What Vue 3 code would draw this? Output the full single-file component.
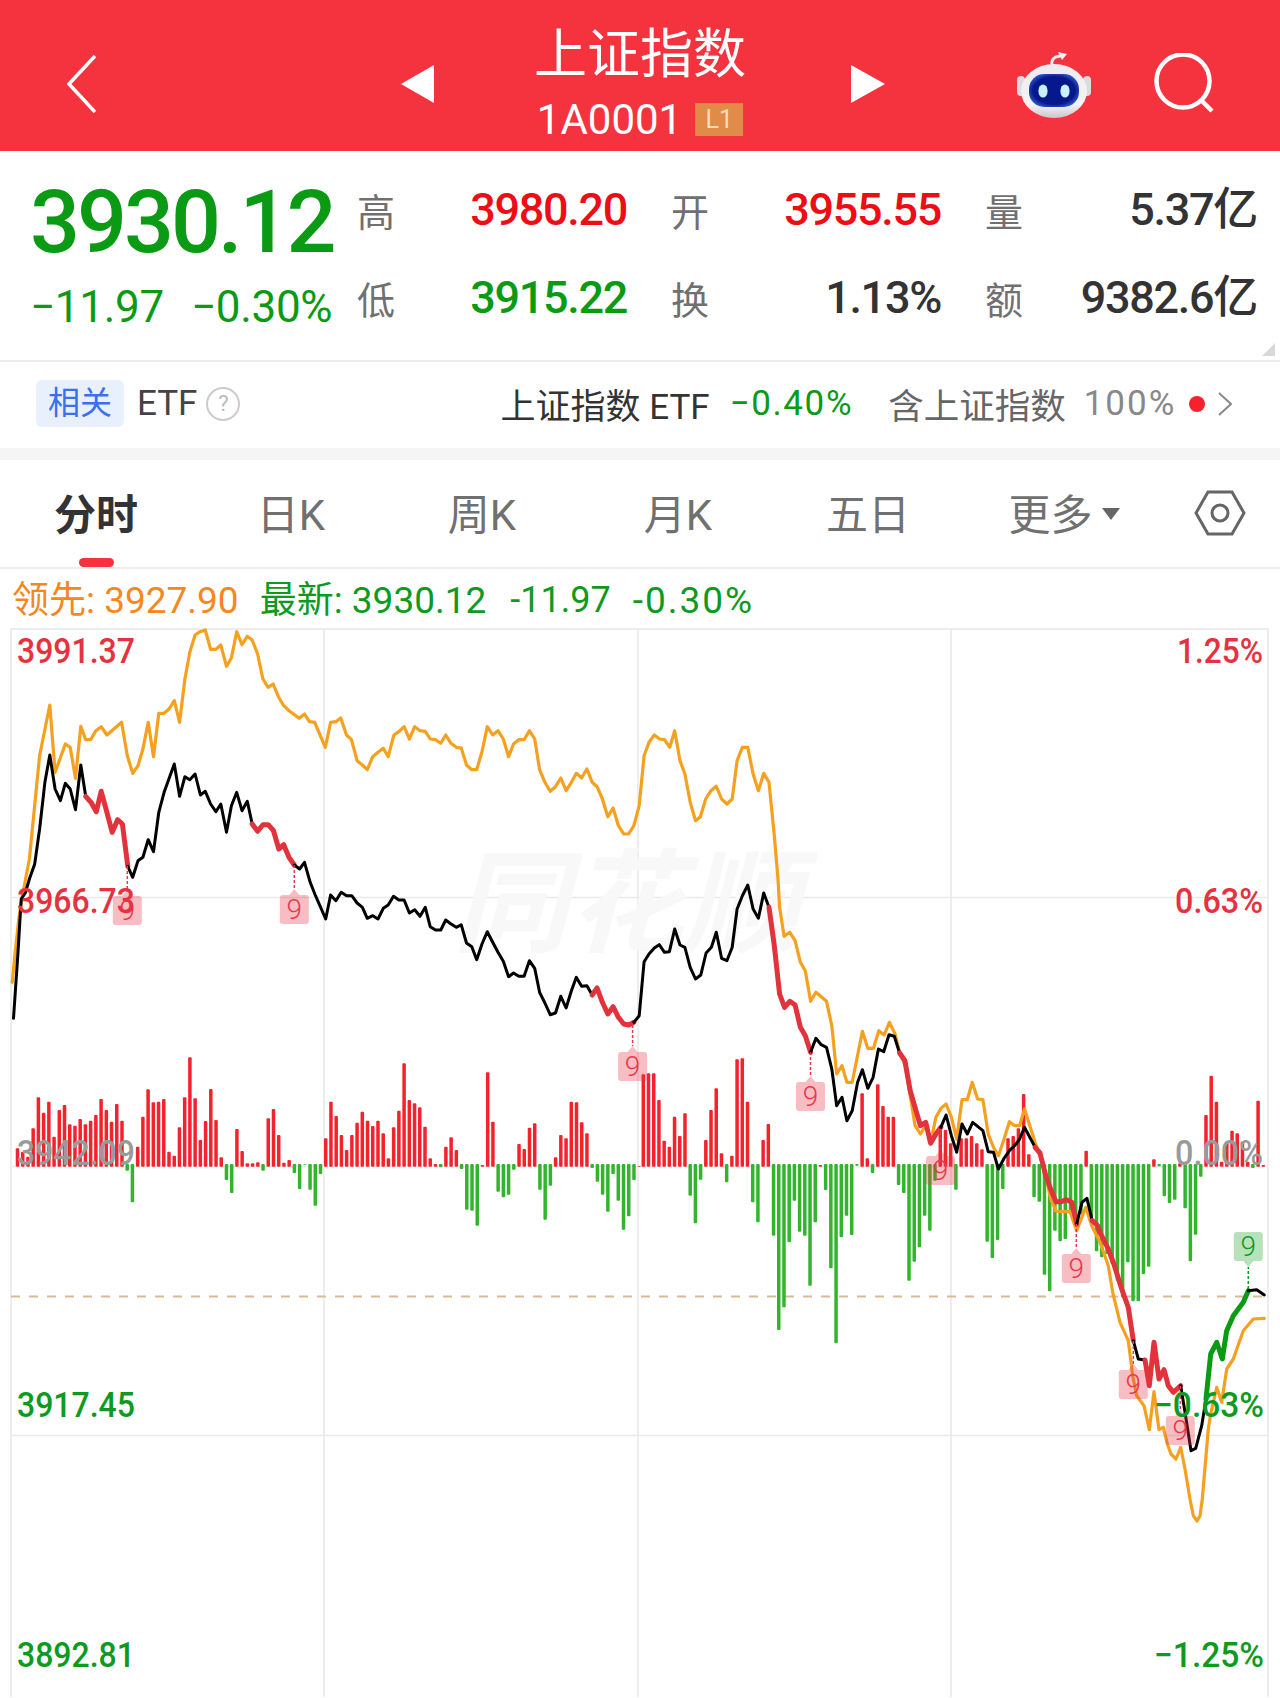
<template>
  <div class="page">
    <!-- top bar -->
    <header class="topbar">
      <svg class="back" viewBox="0 0 29 58"><polyline points="28,1 2,29 28,57" /></svg>
      <svg class="prev" viewBox="0 0 33 38"><polygon points="33,0 0,19 33,38" /></svg>
      <div class="title-block">
        <div class="title">上证指数</div>
        <div class="sub">1A0001<span class="level">L1</span></div>
      </div>
      <svg class="next" viewBox="0 0 34 38"><polygon points="0,0 34,19 0,38" /></svg>
      <svg class="robot" viewBox="0 0 74 68">
        <defs>
          <radialGradient id="visorGlow" cx="50%" cy="50%" r="60%">
            <stop offset="70%" stop-color="#07188c" />
            <stop offset="100%" stop-color="#3f6fe0" />
          </radialGradient>
          <linearGradient id="headShade" x1="0" y1="0" x2="0" y2="1">
            <stop offset="0%" stop-color="#ececee" />
            <stop offset="75%" stop-color="#f4f4f6" />
            <stop offset="100%" stop-color="#c9c6cc" />
          </linearGradient>
        </defs>
        <path d="M35 15 C34 9 38 6 44 6" fill="none" stroke="#eee" stroke-width="3" />
        <polygon points="41,2 50,4 45,10" fill="#f3f3f3" />
        <rect x="0" y="26" width="8" height="20" rx="4" fill="#dcdce0" />
        <rect x="66" y="26" width="8" height="20" rx="4" fill="#dcdce0" />
        <ellipse cx="37" cy="41" rx="33" ry="27" fill="url(#headShade)" />
        <rect x="12" y="24" width="50" height="33" rx="15" fill="url(#visorGlow)" />
        <ellipse cx="26" cy="41" rx="4.6" ry="6.6" fill="#c9f0ff" />
        <ellipse cx="48" cy="41" rx="4.6" ry="6.6" fill="#c9f0ff" />
      </svg>
      <svg class="search" viewBox="0 0 66 62">
        <circle cx="33" cy="28" r="26.5" />
        <line x1="52" y1="48" x2="62" y2="58" />
      </svg>
    </header>

    <!-- quote -->
    <section class="quote">
      <div class="price-col">
        <div class="price">3930.12</div>
        <div class="change"><span>−11.97</span><span>−0.30%</span></div>
      </div>
      <div class="stats">
        <div v-for="s in stats" :key="s.label" class="stat">
          <span class="stat-label">{{ s.label }}</span>
          <span :class="['stat-value', s.tone]">{{ s.value }}</span>
        </div>
      </div>
      <span class="corner"></span>
    </section>

    <!-- related ETF -->
    <section class="etf">
      <span class="tag">相关</span>
      <span class="etf-name">ETF</span>
      <span class="help">?</span>
      <span class="etf-fund">上证指数 ETF</span>
      <span class="etf-pct">−0.40%</span>
      <span class="etf-hold">含上证指数</span>
      <span class="etf-ratio">100%</span>
      <span class="dot"></span>
      <svg class="more" viewBox="0 0 14 24"><polyline points="1,1 13,12 1,23" /></svg>
    </section>
    <div class="spacer"></div>

    <!-- period tabs -->
    <nav class="tabs">
      <div v-for="(t, i) in tabs" :key="t" :class="['tab', { active: i === 0 }]">
        <span>{{ t }}</span>
        <svg v-if="t === '更多'" class="caret" viewBox="0 0 18 12"><polygon points="0,0 18,0 9,12" /></svg>
      </div>
      <div class="tab">
        <svg class="hex" viewBox="0 0 54 48">
          <polygon points="3,24 15,3 39,3 51,24 39,45 15,45" />
          <circle cx="27" cy="24" r="8" />
        </svg>
      </div>
    </nav>

    <!-- legend -->
    <div class="legend">
      <span class="lead">领先: 3927.90</span>
      <span class="last">最新: 3930.12</span>
      <span class="last tight">-11.97</span>
      <span class="last wide">-0.30%</span>
    </div>

    <!-- intraday chart, drawn in page coordinates -->
    <svg class="chart" viewBox="0 629 1280 1069">
      <g class="grid">
        <rect x="11" y="630" width="1257" height="1080" />
        <line x1="324" y1="629" x2="324" y2="1698" />
        <line x1="638" y1="629" x2="638" y2="1698" />
        <line x1="951" y1="629" x2="951" y2="1698" />
        <line x1="11" y1="898.5" x2="1268" y2="898.5" />
        <line x1="11" y1="1167.5" x2="1268" y2="1167.5" />
        <line x1="11" y1="1436.5" x2="1268" y2="1436.5" />
      </g>
      <text class="watermark" x="626" y="944" text-anchor="middle" textLength="346" lengthAdjust="spacingAndGlyphs">同花顺</text>
      <line class="prev-close" x1="11" y1="1297.5" x2="1268" y2="1297.5" />

      <rect v-for="(b, i) in volumeBars" :key="i" :x="b.x" :y="b.y" width="3.5" :height="b.h" rx="1" :fill="b.fill" />

      <polyline class="line orange" :points="orangeLine" />
      <polyline v-for="(s, i) in mainLine" :key="i" :class="['line', s.kind]" :points="s.points" />

      <g v-for="m in markers" :key="m.x" :class="['marker', m.tone]">
        <line class="stem" :x1="m.x" :y1="m.from" :x2="m.x" :y2="m.top < m.from ? m.top + 35 : m.top - 6" />
        <path class="flag" :d="flagPath(m)" />
        <text class="nine" :x="m.x" :y="m.top + 24" text-anchor="middle">9</text>
      </g>

      <text v-for="l in axisLabels" :key="l.text" :class="['axis', l.tone]" :x="l.x" :y="l.y" :textLength="l.w"
        lengthAdjust="spacingAndGlyphs">{{ l.text }}</text>
    </svg>
  </div>
</template>

<script setup>
const stats = [
  { label: '高', value: '3980.20', tone: 'up' },
  { label: '开', value: '3955.55', tone: 'up' },
  { label: '量', value: '5.37亿', tone: 'flat' },
  { label: '低', value: '3915.22', tone: 'down' },
  { label: '换', value: '1.13%', tone: 'flat' },
  { label: '额', value: '9382.6亿', tone: 'flat' }
];

const tabs = ['分时', '日K', '周K', '月K', '五日', '更多'];

const axisLabels = [
  { text: '3991.37', x: 17, y: 664, w: 118, tone: 'up' },
  { text: '3966.73', x: 17, y: 914, w: 118, tone: 'up' },
  { text: '3942.09', x: 17, y: 1166, w: 118, tone: 'zero' },
  { text: '3917.45', x: 17, y: 1418, w: 118, tone: 'down' },
  { text: '3892.81', x: 17, y: 1668, w: 118, tone: 'down' },
  { text: '1.25%', x: 1177, y: 664, w: 86, tone: 'up' },
  { text: '0.63%', x: 1175, y: 914, w: 88, tone: 'up' },
  { text: '0.00%', x: 1175, y: 1166, w: 88, tone: 'zero' },
  { text: '−0.63%', x: 1154, y: 1418, w: 110, tone: 'down' },
  { text: '−1.25%', x: 1154, y: 1668, w: 110, tone: 'down' }
];

// the lines were read off enlarged crops, so each run is given in its crop's units
const crop = (ox, oy, sx) => (pts) => pts.map(([x, y]) => [ox + x / sx, oy + y / 3]);
const upperLeft = crop(0, 460, 2.45);
const upperRight = crop(640, 460, 2.45);
const lowerLeft = crop(0, 880, 2.45);
const lowerRight = crop(640, 880, 2.45);
const tail = crop(960, 1200, 3);
const toPoints = (pts) => pts.map(([x, y]) => `${x.toFixed(1)},${y.toFixed(1)}`).join(' ');

const orangeLine = toPoints([
  ...lowerLeft([[30, 310], [38, 210], [46, 120], [55, 50]]),
  ...upperLeft([
    [72, 1200], [97, 890], [122, 738], [135, 940], [160, 855], [172, 865], [185, 958], [198, 802], [210, 842],
    [222, 842], [235, 815], [248, 803], [262, 828], [298, 790], [312, 890], [325, 943], [338, 920], [350, 870],
    [363, 790], [376, 893], [389, 763], [402, 763], [414, 750], [427, 725], [440, 790], [453, 660], [465, 580],
    [478, 528], [490, 518], [503, 513], [516, 571], [529, 571], [541, 558], [555, 622], [567, 597], [580, 518],
    [593, 557], [606, 532], [618, 543], [631, 585], [644, 660], [657, 685], [669, 675], [682, 713], [695, 740],
    [708, 755], [733, 778], [746, 765], [758, 788], [771, 790], [797, 865], [810, 790], [823, 788], [835, 777],
    [849, 828], [861, 842], [875, 905], [888, 918], [900, 932], [913, 893], [926, 880], [939, 868], [951, 893],
    [965, 828], [977, 818], [990, 803], [1003, 840], [1016, 803], [1029, 815], [1042, 817], [1054, 840],
    [1067, 842], [1080, 853], [1092, 828], [1105, 853], [1118, 865], [1130, 867], [1143, 918], [1156, 932],
    [1168, 932], [1181, 878], [1194, 803], [1207, 828], [1220, 815], [1233, 840], [1246, 893], [1258, 855],
    [1271, 842], [1284, 842], [1297, 815], [1310, 840], [1322, 932], [1335, 970], [1348, 997], [1361, 983],
    [1374, 957], [1387, 995], [1400, 970], [1412, 943], [1425, 957], [1438, 930], [1451, 970], [1463, 983],
    [1476, 1020], [1489, 1073], [1502, 1047], [1515, 1100], [1528, 1125], [1540, 1125], [1553, 1100], [1566, 1040]
  ]),
  ...upperRight([
    [10, 890], [22, 850], [35, 828], [48, 840], [60, 842], [73, 865], [85, 815], [98, 905], [110, 945], [123, 1030],
    [136, 1085], [148, 1073], [161, 1020], [174, 995], [187, 982], [200, 1020], [213, 1035], [226, 1020], [238, 905],
    [251, 865], [264, 865], [277, 945], [290, 995], [303, 943], [316, 970], [329, 1130], [338, 1260]
  ]),
  ...lowerRight([
    [342, 85], [353, 172], [367, 160], [380, 185], [393, 250], [405, 275], [418, 367], [431, 340], [457, 367],
    [470, 440], [482, 585], [495, 560], [507, 610], [520, 610], [545, 457], [558, 508], [572, 508], [585, 455],
    [598, 468], [611, 430], [625, 465], [636, 520], [650, 560], [662, 650], [674, 740], [687, 765], [700, 740],
    [712, 790], [725, 715], [738, 687], [750, 675], [763, 715], [776, 780], [789, 662], [802, 662], [814, 610],
    [827, 660], [840, 662], [853, 765], [866, 805], [878, 830], [892, 780], [905, 728], [918, 740], [930, 740],
    [942, 690], [955, 740], [968, 790], [980, 830], [993, 880], [1006, 960], [1019, 995]
  ]),
  ...tail([
    [285, 35], [300, 38], [330, 38], [350, 95], [377, 25], [395, 80], [420, 130], [445, 200], [458, 280], [480, 370],
    [505, 425], [518, 530], [530, 590], [552, 620], [568, 692], [582, 578], [597, 692], [610, 685], [622, 735],
    [633, 765], [648, 780], [662, 745], [675, 810], [690, 900], [700, 950], [711, 966], [720, 950], [727, 900],
    [745, 690], [752, 645], [770, 565], [785, 610], [800, 510], [820, 480], [850, 395], [880, 360], [913, 358]
  ])
]);

// price line: black, with red stretches on the falling legs and green on the last rally
const mainLine = [
  ['black', [
    ...lowerLeft([[33, 418], [44, 220], [52, 60], [62, 42], [72, 0]]),
    ...upperLeft([[85, 1215], [97, 1110], [110, 970], [122, 888], [135, 990], [148, 1025], [160, 973], [172, 990],
      [185, 1052], [198, 918], [210, 1012]])
  ]],
  ['red', upperLeft([[210, 1012], [223, 1030], [236, 1058], [248, 997], [262, 1060], [275, 1120], [288, 1082], [300, 1095],
    [313, 1222]])],
  ['black', upperLeft([[313, 1222], [325, 1255], [338, 1205], [350, 1195], [363, 1142], [376, 1178], [389, 1060], [402, 1000],
    [427, 915], [440, 1012], [453, 953], [465, 962], [478, 945], [491, 1008], [503, 997], [516, 1035], [529, 1058],
    [541, 1035], [555, 1120], [567, 1040], [580, 1000], [593, 1055], [606, 1027], [618, 1095]])],
  ['red', upperLeft([[618, 1095], [631, 1117], [644, 1097], [657, 1097], [670, 1115], [683, 1170], [695, 1157], [708, 1195],
    [721, 1218]])],
  ['black', [
    ...upperLeft([[721, 1218], [734, 1230], [746, 1210]]),
    ...lowerLeft([[760, 10], [773, 50], [798, 120], [810, 48], [823, 65], [836, 40], [849, 50], [862, 50], [875, 72],
      [888, 85], [900, 118], [913, 110], [926, 120], [939, 88], [951, 78], [964, 52], [977, 63], [990, 63], [1003, 102],
      [1016, 92], [1029, 112], [1042, 85], [1054, 143], [1067, 153], [1080, 153], [1092, 123], [1105, 135], [1118, 145],
      [1130, 137], [1143, 192], [1156, 203], [1168, 242], [1181, 195], [1194, 158], [1207, 190], [1220, 220], [1233, 247],
      [1246, 293], [1258, 282], [1271, 292], [1284, 292], [1297, 245], [1310, 268], [1322, 340], [1335, 372], [1348, 407],
      [1361, 402], [1374, 352], [1387, 387], [1400, 335], [1412, 295], [1425, 322], [1438, 320], [1451, 348]])
  ]],
  ['red', lowerLeft([[1451, 348], [1463, 327], [1476, 370], [1489, 405], [1502, 383], [1515, 415], [1528, 435], [1540, 438],
    [1553, 430]])],
  ['black', [
    ...lowerLeft([[1553, 430], [1566, 410]]),
    ...lowerRight([[10, 248], [22, 225], [35, 207], [47, 197], [60, 220], [72, 218], [85, 150], [98, 198], [110, 205],
      [123, 265], [136, 300], [149, 288], [162, 222], [175, 205], [187, 160], [200, 238], [213, 245], [226, 205], [238, 90],
      [251, 50], [264, 18], [277, 90], [290, 118], [303, 42], [316, 85]])
  ]],
  ['red', lowerRight([[316, 85], [329, 200], [342, 345], [354, 385], [367, 367], [380, 378], [393, 445], [405, 470], [418, 520]])],
  ['black', lowerRight([[418, 520], [431, 478], [444, 497], [457, 505], [470, 570], [482, 680], [495, 655], [507, 725], [520, 695],
    [533, 610], [545, 572], [558, 628], [571, 595], [584, 510], [597, 518], [610, 467], [623, 472], [636, 522]])],
  ['red', lowerRight([[636, 522], [649, 545], [662, 635], [675, 690], [687, 740], [700, 730], [712, 793], [725, 765], [737, 745]])],
  ['black', lowerRight([[737, 745], [750, 708], [763, 770], [776, 820], [789, 735], [802, 765], [815, 730], [840, 755], [853, 818],
    [866, 820], [878, 870], [892, 838], [905, 815], [918, 800], [930, 780], [942, 745], [955, 775], [968, 805]])],
  ['red', lowerRight([[968, 805], [980, 822], [993, 885], [1006, 930], [1019, 968], [1032, 968], [1045, 962], [1058, 970],
    [1070, 1035]])],
  ['black', lowerRight([[1070, 1035], [1083, 970], [1095, 958], [1108, 1025]])],
  ['red', [
    ...lowerRight([[1108, 1025], [1121, 1040]]),
    ...tail([[420, 100], [445, 150], [460, 190], [485, 270], [505, 325], [520, 425]])
  ]],
  ['black', tail([[520, 425], [535, 480], [555, 483]])],
  ['red', tail([[555, 483], [568, 560], [582, 430], [597, 540], [612, 512], [625, 560], [640, 580], [662, 560]])],
  ['black', tail([[662, 560], [675, 640], [693, 755], [707, 748], [725, 680], [738, 600]])],
  ['green', tail([[738, 600], [752, 465], [770, 430], [787, 480], [800, 395], [820, 350], [850, 310], [865, 275]])],
  ['black', tail([[865, 275], [890, 272], [913, 288]])]
].map(([kind, pts]) => ({ kind, points: toPoints(pts) }));

// volume per minute in crop units (3 = 1px), positive is red, negative is green
const morningVolume = [
  55, 45, 30, 115, 208, 162, 195, 90, 170, 185, 127, 123, 143, 127, 138, 155, 203, 170, 135, 188, 138, -20, -115, 60,
  150, 232, 193, 195, 203, 45, 33, 118, 208, 328, 205, 80, 137, 233, 140, 28, -48, -87, 113, 47, 10, 10, 13, -20,
  145, 173, 95, 12, 20, -27, -75, -2, -77, -125, -30, 85, 195, 152, 95, 50, 95, 132, 165, 138, 122, 138, 100, 25,
  118, 168, 310, 200, 190, 178, 120, 25, 8, -10, 60, 88, 50, -15, -137, -140, -185, 5, 283, 135, -83, -100, -92,
  -17, 68, 53, 117, 130, -77, -167, -65, 28, 95, 85, 195, 193, 133, 100, -12, -53, -92, -143, -30, -110, -197,
  -157, -48, 2
];
const afternoonVolume = [
  277, 280, 280, 200, 78, 60, 150, 92, 160, -95, -178, -47, 80, 170, 235, 40, -55, 33, 322, 325, 195, -115, -175, 80,
  128, -215, -498, -430, -235, -110, -203, -215, -365, -175, 5, -78, -313, -538, -220, -155, -213, -5, 220, 25, -27,
  247, 182, 150, 150, -63, -87, -350, -293, -250, -155, -200, -50, 110, 110, 70, -77, 85, 85, 92, 70, 52, -233, -282,
  -228, -75, 85, 92, 115, 218, 37, -100, -113, -332, -382, -200, -232, -225, -150, -170, -150, 48, -160, -262, -280,
  -270, -300, -350, -400, -295, -412, -412, -330, -308, 22, -7, -97, -117, -107, 10, -133, -292, -212, -38, 155, 273,
  195, 15, 70, 108, 100, 75, 15, -12, 198, 5
];

const toBars = (values, x0, x1) => {
  const step = (x1 - x0) / (values.length - 1);
  return values.map((v, i) => {
    const h = Math.abs(v) / 3;
    return {
      x: x0 + i * step - 1.75,
      y: v > 0 ? 1167.7 - h : 1165,
      h,
      fill: v > 0 ? '#f5212b' : '#32b42c'
    };
  });
};
const volumeBars = [...toBars(morningVolume, 17.5, 639.2), ...toBars(afternoonVolume, 643.3, 1263.3)];

// "9" signal flags: x is the flag centre, top its box top, from where the stem leaves the line
const markers = [
  { x: 127.3, top: 897, from: 867, tone: 'sell' },
  { x: 294.3, top: 896, from: 866, tone: 'sell' },
  { x: 632.6, top: 1053, from: 1026, tone: 'sell' },
  { x: 810.5, top: 1083, from: 1053, tone: 'sell' },
  { x: 940.5, top: 1157, from: 1133, tone: 'sell' },
  { x: 1076.3, top: 1255, from: 1225, tone: 'sell' },
  { x: 1133.3, top: 1371, from: 1342, tone: 'sell' },
  { x: 1180.3, top: 1417, from: 1387, tone: 'sell' },
  { x: 1248.3, top: 1233, from: 1290, tone: 'buy' }
];

const flagPath = ({ x, top, tone }) => {
  const l = x - 14.5;
  const r = x + 14.5;
  const b = top + 29;
  if (tone === 'buy') {
    return `M${l + 3} ${top}H${r - 3}Q${r} ${top} ${r} ${top + 3}V${b - 3}Q${r} ${b} ${r - 3} ${b}H${x + 5}L${x} ${b + 6}L${x - 5} ${b}H${l + 3}Q${l} ${b} ${l} ${b - 3}V${top + 3}Q${l} ${top} ${l + 3} ${top}Z`;
  }
  return `M${l + 3} ${top}H${x - 5}L${x} ${top - 6}L${x + 5} ${top}H${r - 3}Q${r} ${top} ${r} ${top + 3}V${b - 3}Q${r} ${b} ${r - 3} ${b}H${l + 3}Q${l} ${b} ${l} ${b - 3}V${top + 3}Q${l} ${top} ${l + 3} ${top}Z`;
};
</script>

<style scoped>
.page {
  width: 1280px;
  height: 1698px;
  overflow: hidden;
  background: #fff;
  font-family: Roboto, "Noto Sans CJK SC", sans-serif;
}

/* top bar */
.topbar {
  display: flex;
  align-items: center;
  box-sizing: border-box;
  height: 151px;
  padding-top: 16px;
  background: #f5333f;
  color: #fff;
}
.back {
  width: 29px;
  height: 58px;
  margin-left: 67px;
  fill: none;
  stroke: #fff;
  stroke-width: 3.5;
}
.prev {
  width: 33px;
  height: 38px;
  margin-left: 305px;
  fill: #fff;
}
.next {
  width: 34px;
  height: 38px;
  margin-left: 5px;
  fill: #fff;
}
.title-block {
  align-self: flex-start;
  width: 412px;
  margin-top: -16px;
  text-align: center;
}
.title {
  padding-top: 16px;
  font-family: "Noto Sans CJK SC", sans-serif;
  font-size: 53px;
  line-height: 68px;
}
.sub {
  display: flex;
  align-items: center;
  justify-content: center;
  height: 62px;
  margin-top: 4px;
  font-size: 42px;
}
.level {
  width: 48px;
  height: 33px;
  margin-left: 13px;
  background: #e08b47;
  color: #fbdcb4;
  font-size: 25px;
  line-height: 33px;
}
.robot {
  width: 74px;
  height: 68px;
  margin-left: 132px;
}
.search {
  width: 66px;
  height: 62px;
  margin-left: 59px;
  fill: none;
  stroke: #fff;
  stroke-width: 4.5;
}

/* quote */
.quote {
  position: relative;
  display: flex;
  box-sizing: border-box;
  height: 211px;
  border-bottom: 2px solid #ececec;
}
.price-col {
  box-sizing: border-box;
  width: 358px;
  padding: 21px 0 0 30px;
  color: #0a9a14;
}
.price {
  font-size: 88px;
  font-weight: 500;
  line-height: 100px;
  letter-spacing: -3px;
}
.change {
  display: flex;
  gap: 27px;
  font-size: 44px;
  line-height: 70px;
  letter-spacing: -0.3px;
}
.stats {
  display: grid;
  grid-template-columns: repeat(3, 269px);
  grid-auto-rows: 88px;
  column-gap: 45px;
  padding-top: 14px;
}
.stat {
  display: flex;
  align-items: center;
  justify-content: space-between;
}
.stat-label {
  margin-left: -1px;
  color: #707070;
  font-family: "Noto Sans CJK SC", sans-serif;
  font-size: 38px;
}
.stat-value {
  font-size: 45px;
  font-weight: 500;
  line-height: 1;
  letter-spacing: -1.3px;
}
.stat:nth-child(3n) .stat-value {
  margin-right: -2px;
}
.stat-value.up {
  color: #ee0d14;
}
.stat-value.down {
  color: #0a9a14;
}
.stat-value.flat {
  color: #333;
}
.corner {
  position: absolute;
  right: 5px;
  bottom: 4px;
  border-style: solid;
  border-width: 0 0 13px 13px;
  border-color: transparent transparent #d8d8d8 transparent;
}

/* related ETF */
.etf {
  display: flex;
  align-items: center;
  box-sizing: border-box;
  height: 86px;
  padding-bottom: 3px;
  font-size: 35px;
}
.tag {
  width: 88px;
  height: 47px;
  margin-left: 36px;
  border-radius: 6px;
  background: #e8effd;
  color: #3a6ff0;
  font-size: 32px;
  line-height: 47px;
  text-align: center;
}
.etf-name {
  margin-left: 13px;
  color: #444;
}
.help {
  box-sizing: border-box;
  width: 34px;
  height: 34px;
  margin-left: 9px;
  border: 2.5px solid #ccc;
  border-radius: 50%;
  color: #bbb;
  font-size: 22px;
  line-height: 29px;
  text-align: center;
}
.etf-fund {
  margin-left: 260px;
  color: #333;
  white-space: nowrap;
}
.etf-pct {
  margin-left: 20px;
  color: #0a9a14;
  letter-spacing: 1.6px;
}
.etf-hold {
  margin-left: 35px;
  color: #666;
  font-size: 35.5px;
}
.etf-ratio {
  margin-left: 18px;
  color: #888;
  letter-spacing: 2px;
}
.dot {
  width: 16px;
  height: 16px;
  margin-left: 13px;
  border-radius: 50%;
  background: #f5222d;
}
.more {
  width: 14px;
  height: 24px;
  margin-left: 13px;
  fill: none;
  stroke: #888;
  stroke-width: 2;
}
.spacer {
  height: 12px;
  background: #f5f5f5;
}

/* tabs */
.tabs {
  display: grid;
  grid-template-columns: 192px 198px 184px 208px 172px 220px 92px;
  box-sizing: border-box;
  height: 109px;
  border-bottom: 2px solid #eee;
}
.tab {
  position: relative;
  display: flex;
  align-items: center;
  justify-content: center;
  padding-bottom: 4px;
  color: #707070;
  font-size: 42px;
}
.tab.active {
  color: #333;
  font-weight: 700;
}
.tab.active::after {
  content: "";
  position: absolute;
  bottom: 0;
  left: 79px;
  width: 35px;
  height: 9px;
  border-radius: 5px;
  background: #f5333f;
}
.caret {
  width: 18px;
  height: 12px;
  margin: 4px 0 0 9px;
  fill: #666;
}
.hex {
  width: 54px;
  height: 48px;
  margin-top: 3px;
  fill: none;
  stroke: #666;
  stroke-width: 3;
}

/* legend */
.legend {
  display: flex;
  gap: 24px;
  box-sizing: border-box;
  height: 59px;
  padding: 3px 0 0 12px;
  font-size: 37px;
  line-height: 57px;
}
.lead {
  margin-right: -3px;
  color: #f5871f;
}
.last {
  color: #0d9a1e;
}
.last.tight {
  margin-right: -2px;
  font-size: 36px;
}
.last.wide {
  letter-spacing: 2px;
}

/* chart */
.chart {
  display: block;
  width: 1280px;
  height: 1069px;
}
.grid rect,
.grid line {
  fill: none;
  stroke: #e9e9e9;
  stroke-width: 1.6;
}
.watermark {
  fill: #f8f8f8;
  font-family: "Noto Sans CJK SC", sans-serif;
  font-size: 112px;
  font-style: italic;
  font-weight: 700;
}
.prev-close {
  stroke: #d9b996;
  stroke-width: 2;
  stroke-dasharray: 9 9;
}
.line {
  fill: none;
  stroke-linejoin: round;
  stroke-linecap: round;
}
.line.orange {
  stroke: #f5a01e;
  stroke-width: 3.2;
}
.line.black {
  stroke: #000;
  stroke-width: 3;
}
.line.red {
  stroke: #e2333d;
  stroke-width: 5;
}
.line.green {
  stroke: #0a9a14;
  stroke-width: 5;
}
.stem {
  stroke-width: 1.5;
  stroke-dasharray: 3 2;
}
.marker.sell .stem {
  stroke: #e8384a;
}
.marker.buy .stem {
  stroke: #0d9a1e;
}
.marker.sell .flag {
  fill: rgba(232, 56, 74, 0.33);
}
.marker.buy .flag {
  fill: rgba(13, 154, 30, 0.3);
}
.nine {
  font-size: 28px;
  font-weight: 300;
}
.marker.sell .nine {
  fill: #e8384a;
}
.marker.buy .nine {
  fill: #0d9a1e;
}
.axis {
  font-size: 35px;
  font-weight: 500;
}
.axis.up {
  fill: #e5323e;
}
.axis.down {
  fill: #0d9a1e;
}
.axis.zero {
  fill: #9a9a9a;
}
</style>
